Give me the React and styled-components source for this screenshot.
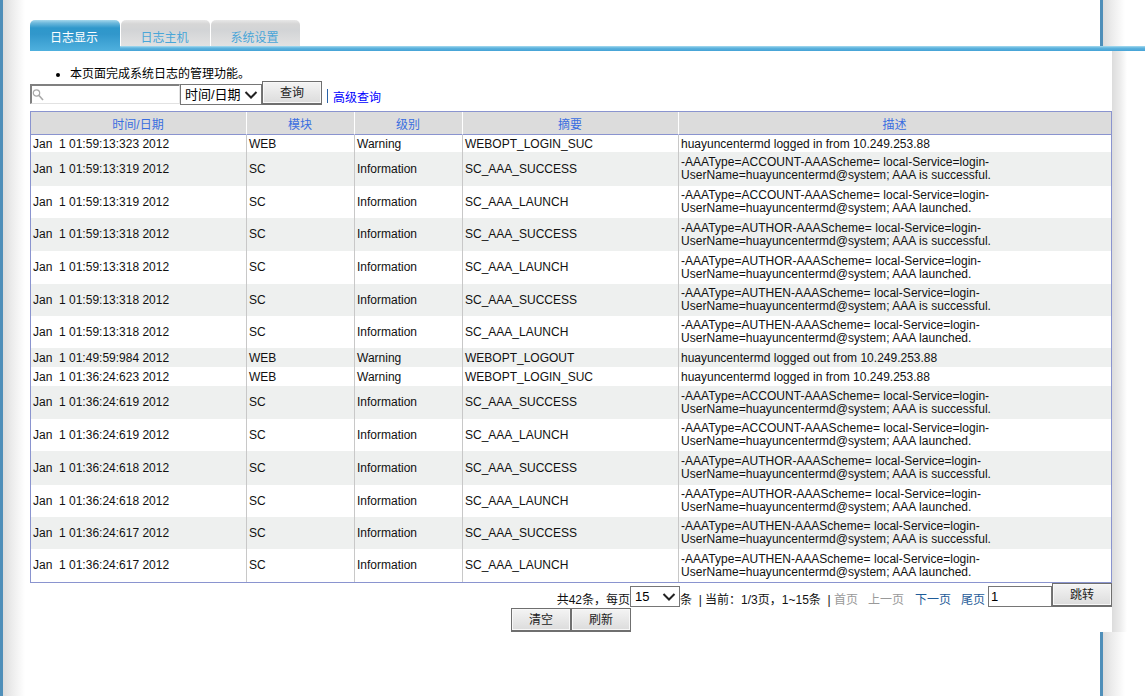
import React from 'react';
import styled, { createGlobalStyle } from 'styled-components';

const FONT = '"Liberation Sans", "Noto Sans CJK SC", sans-serif';

const CHEVRON =
  "url(\"data:image/svg+xml,%3Csvg xmlns='http://www.w3.org/2000/svg' width='14' height='8'%3E%3Cpath d='M1.5 1l5.5 5.5L12.5 1' fill='none' stroke='%23222' stroke-width='2'/%3E%3C/svg%3E\")";

const EDGE = 'linear-gradient(to right, #4f8fb9 3px, #dcdcdc 3px, #ececec 12px, #fff 25px)';

const Global = createGlobalStyle`
  html, body {
    margin: 0;
    padding: 0;
  }
`;

const Shell = styled.div`
  display: flex;
  width: 1145px;
  height: 696px;
  overflow: hidden;
  font-family: ${FONT};
  font-size: 12px;
  color: #000;
  background: ${EDGE} 1100px 0 / 25px 100% no-repeat;
`;

const LeftEdge = styled.div`
  flex: 0 0 30px;
  background: ${EDGE};
`;

const Main = styled.div`
  flex: 1;
  min-width: 0;
  padding-top: 20px;
`;

const TabBar = styled.div`
  display: flex;
  gap: 1px;
  height: 31px;
  background: linear-gradient(#a9dcf0, #5fb4de 2px, #45a3d6) 0 26px / 100% 5px no-repeat;
`;

const Tab = styled.div`
  width: ${p => p.$w}px;
  height: ${p => (p.$active ? 31 : 26)}px;
  box-sizing: border-box;
  padding: 11px 2px 0 0;
  text-align: center;
  font-size: 12px;
  line-height: 14px;
  border-radius: 5px 5px 0 0;
  color: ${p => (p.$active ? '#fff' : '#4aa6d8')};
  background: ${p =>
    p.$active
      ? 'linear-gradient(#a5d8ec 0, #6db8dc 3px, #2f98cb 8px, #3197cb 14px, #4fb0de 100%)'
      : 'linear-gradient(#e8e8e8 0, #d6d6d6 4px, #d2d4d6 10px, #e2e2e2 100%)'};
`;

const Panel = styled.div`
  height: 581px;
  background: linear-gradient(to right, #fff 1082px, #dcdcdc 1082px, #ececec 1090px, #fff 1097px);
`;

const Content = styled.div`
  width: 1082px;
  box-sizing: border-box;
  padding-top: 16px;
`;

const Notes = styled.ul`
  margin: 0;
  padding-left: 40px;
  line-height: 14px;
  font-size: 12px;
`;

const SearchRow = styled.div`
  display: flex;
  align-items: flex-end;
  height: 24px;
  margin-bottom: 6px;
`;

const SearchBox = styled.div`
  position: relative;
  width: 150px;
  height: 20px;
  margin-bottom: 1px;
`;

const SearchInput = styled.input`
  display: block;
  width: 100%;
  height: 100%;
  box-sizing: border-box;
  padding: 0 0 0 14px;
  border-style: solid;
  border-width: 2px 1px 1px 2px;
  border-color: #808080 #e2e2e2 #e2e2e2 #808080;
  outline: none;
`;

const SearchIcon = styled.svg`
  position: absolute;
  left: 2px;
  top: 4px;
`;

const Select = styled.select`
  box-sizing: border-box;
  width: ${p => p.$w}px;
  height: 21px;
  padding: 0 0 0 ${p => p.$pad}px;
  border: 1px solid #767676;
  border-radius: 0;
  appearance: none;
  background: #fff ${CHEVRON} no-repeat right 3px center;
  font-family: ${FONT};
  font-size: 13px;
  color: #000;
`;

const Button = styled.button`
  box-sizing: border-box;
  width: 60px;
  height: 24px;
  padding: 0 0 3px;
  border: 1px solid #6f6f6f;
  border-width: 1px 1px 2px;
  border-radius: 0;
  background: linear-gradient(#f4f4f4, #dcdcdc);
  box-shadow: inset 0 0 0 1px #f8f8f8;
  font-family: ${FONT};
  font-size: 12px;
  color: #222;
`;

const Divider = styled.span`
  width: 1px;
  height: 14px;
  margin: 0 5px 2px 5px;
  background: #2a63a8;
`;

const AdvancedLink = styled.a`
  line-height: 14px;
  color: #0000ff;
  font-size: 12px;
`;

const LogTable = styled.table`
  width: 1082px;
  box-sizing: border-box;
  table-layout: fixed;
  border-collapse: separate;
  border-spacing: 0;
  border: 1px solid #8a94cf;
`;

const HeadCell = styled.th`
  height: 22px;
  padding: 0 1px 0 0;
  font-size: 12px;
  font-weight: normal;
  color: #3a6ee0;
  background: #dcdcdc;
  border-right: 1px solid #fff;
  border-bottom: 1px solid #8a94cf;
  &:last-child {
    border-right: 0;
  }
`;

const Row = styled.tr`
  height: ${p => p.$h}px;
  &:nth-child(even) {
    background: #eef0ef;
  }
`;

const Cell = styled.td`
  padding: ${p => (p.$single ? '1px' : '0')} 2px 0;
  font-size: 12px;
  line-height: 13px;
  white-space: pre-wrap;
  border-right: 1px solid #c8c8c8;
  color: #111;
  &:last-child {
    border-right: 0;
    letter-spacing: ${p => (p.$single ? '0' : '0.04px')};
  }
`;

const Pager = styled.div`
  display: flex;
  justify-content: flex-end;
  align-items: flex-end;
  height: 24px;
  margin-bottom: 1px;
`;

const PagerText = styled.span`
  font-size: 12px;
  line-height: 14px;
  white-space: pre;
  margin-right: ${p => p.$mr || 0}px;
  color: ${p => p.$color || '#111'};
`;

const JumpInput = styled.input`
  box-sizing: border-box;
  width: 64px;
  height: 21px;
  padding: 0 0 0 2px;
  border: 1px solid #767676;
  font-family: ${FONT};
  font-size: 13px;
  outline: none;
`;

const Actions = styled.div`
  display: flex;
  justify-content: center;
`;

const msg = (type, tail) =>
  `-AAAType=${type}-AAAScheme= local-Service=login-UserName=huayuncentermd@system; ${tail}`;
const OK = 'AAA is successful.';
const LAUNCHED = 'AAA launched.';

const rows = [
  [17, '01:59:13:323', 'WEB', 'Warning', 'WEBOPT_LOGIN_SUC', 'huayuncentermd logged in from 10.249.253.88'],
  [34, '01:59:13:319', 'SC', 'Information', 'SC_AAA_SUCCESS', msg('ACCOUNT', OK)],
  [32, '01:59:13:319', 'SC', 'Information', 'SC_AAA_LAUNCH', msg('ACCOUNT', LAUNCHED)],
  [33, '01:59:13:318', 'SC', 'Information', 'SC_AAA_SUCCESS', msg('AUTHOR', OK)],
  [33, '01:59:13:318', 'SC', 'Information', 'SC_AAA_LAUNCH', msg('AUTHOR', LAUNCHED)],
  [32, '01:59:13:318', 'SC', 'Information', 'SC_AAA_SUCCESS', msg('AUTHEN', OK)],
  [32, '01:59:13:318', 'SC', 'Information', 'SC_AAA_LAUNCH', msg('AUTHEN', LAUNCHED)],
  [19, '01:49:59:984', 'WEB', 'Warning', 'WEBOPT_LOGOUT', 'huayuncentermd logged out from 10.249.253.88'],
  [19, '01:36:24:623', 'WEB', 'Warning', 'WEBOPT_LOGIN_SUC', 'huayuncentermd logged in from 10.249.253.88'],
  [33, '01:36:24:619', 'SC', 'Information', 'SC_AAA_SUCCESS', msg('ACCOUNT', OK)],
  [32, '01:36:24:619', 'SC', 'Information', 'SC_AAA_LAUNCH', msg('ACCOUNT', LAUNCHED)],
  [34, '01:36:24:618', 'SC', 'Information', 'SC_AAA_SUCCESS', msg('AUTHOR', OK)],
  [32, '01:36:24:618', 'SC', 'Information', 'SC_AAA_LAUNCH', msg('AUTHOR', LAUNCHED)],
  [32, '01:36:24:617', 'SC', 'Information', 'SC_AAA_SUCCESS', msg('AUTHEN', OK)],
  [33, '01:36:24:617', 'SC', 'Information', 'SC_AAA_LAUNCH', msg('AUTHEN', LAUNCHED)],
];

const columns = [
  ['时间/日期', 216],
  ['模块', 108],
  ['级别', 108],
  ['摘要', 216],
  ['描述', 432],
];

export default function App() {
  return (
    <Shell>
      <Global />
      <LeftEdge />
      <Main>
        <TabBar>
          <Tab $w={90} $active>日志显示</Tab>
          <Tab $w={89}>日志主机</Tab>
          <Tab $w={89}>系统设置</Tab>
        </TabBar>
        <Panel>
          <Content>
            <Notes>
              <li>本页面完成系统日志的管理功能。</li>
            </Notes>
            <SearchRow>
              <SearchBox>
                <SearchInput />
                <SearchIcon width="12" height="14" viewBox="0 0 12 14" fill="none" stroke="#a8a8a8">
                  <circle cx="4.5" cy="5" r="3.2" strokeWidth="1.2" />
                  <path d="M7 7.5l4 4.5" strokeWidth="1.6" />
                </SearchIcon>
              </SearchBox>
              <Select $w={82} $pad={4} defaultValue="date">
                <option value="date">时间/日期</option>
              </Select>
              <Button>查询</Button>
              <Divider />
              <AdvancedLink>高级查询</AdvancedLink>
            </SearchRow>
            <LogTable>
              <colgroup>
                {columns.map(([name, w]) => (
                  <col key={name} width={w} />
                ))}
              </colgroup>
              <thead>
                <tr>
                  {columns.map(([name]) => (
                    <HeadCell key={name}>{name}</HeadCell>
                  ))}
                </tr>
              </thead>
              <tbody>
                {rows.map(([h, time, mod, level, code, text], i) => (
                  <Row key={i} $h={h}>
                    <Cell $single={h < 20}>{`Jan  1 ${time} 2012`}</Cell>
                    <Cell $single={h < 20}>{mod}</Cell>
                    <Cell $single={h < 20}>{level}</Cell>
                    <Cell $single={h < 20}>{code}</Cell>
                    <Cell $single={h < 20}>{text}</Cell>
                  </Row>
                ))}
              </tbody>
            </LogTable>
            <Pager>
              <PagerText>共42条，每页</PagerText>
              <Select $w={50} $pad={4} defaultValue="15">
                <option value="15">15</option>
              </Select>
              <PagerText>{'条  | 当前：1/3页，1~15条  | '}</PagerText>
              <PagerText $color="#999" $mr={10}>首页</PagerText>
              <PagerText $color="#999" $mr={11}>上一页</PagerText>
              <PagerText $color="#1f5c99" $mr={10}>下一页</PagerText>
              <PagerText $color="#1f5c99" $mr={3}>尾页</PagerText>
              <JumpInput defaultValue="1" />
              <Button>跳转</Button>
            </Pager>
            <Actions>
              <Button>清空</Button>
              <Button>刷新</Button>
            </Actions>
          </Content>
        </Panel>
      </Main>
    </Shell>
  );
}
